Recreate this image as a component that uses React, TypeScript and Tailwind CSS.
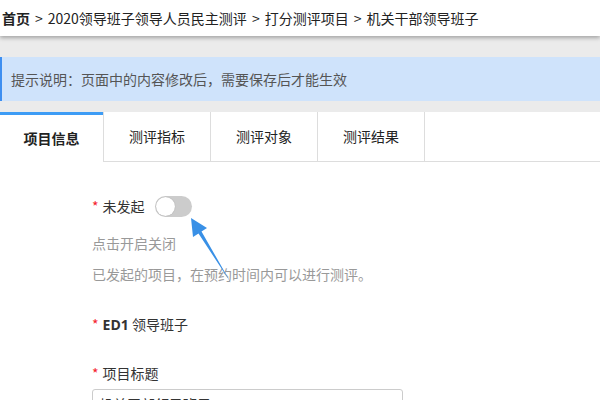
const font = "font-['Microsoft_YaHei','Noto_Sans_CJK_SC','Liberation_Sans',sans-serif]";

function Required({ children }: { children: React.ReactNode }) {
  return (
    <div className="flex items-center gap-[4px] text-[14px] text-[#333]">
      <span className="text-[#f5222d]">*</span>
      {children}
    </div>
  );
}

export default function App() {
  const tabs = ['测评指标', '测评对象', '测评结果'];
  return (
    <div className={`relative h-[400px] w-[600px] overflow-hidden bg-white ${font}`}>
      <header className="relative z-10 flex h-[36px] items-center bg-white pl-[2px] text-[14px] text-[#222] shadow-[0_2px_4px_rgba(0,0,0,0.3)]">
        <span className="font-bold">首页</span>
        <span className="mx-[5px]">&gt;</span>
        <span>2020领导班子领导人员民主测评</span>
        <span className="mx-[5px]">&gt;</span>
        <span>打分测评项目</span>
        <span className="mx-[5px]">&gt;</span>
        <span>机关干部领导班子</span>
      </header>

      <div className="bg-[#ebebeb] pb-[11px] pt-[21px]">
        <div className="flex h-[44px] items-center border-l-[2px] border-[#3d8ef0] bg-[#cfe3fb] pl-[9px] text-[14px] text-[#555]">
          提示说明：页面中的内容修改后，需要保存后才能生效
        </div>
      </div>

      <nav className="flex h-[50px] bg-white text-[14px] text-[#222]">
        <div className="flex w-[103px] items-center justify-center border-t-[3px] border-[#3d9cf5] font-bold">
          项目信息
        </div>
        {tabs.map((t) => (
          <div key={t} className="flex w-[107px] items-center justify-center border-b border-l border-[#dddddd]">
            {t}
          </div>
        ))}
        <div className="flex-1 border-b border-l border-[#dddddd]" />
      </nav>

      <section className="flex flex-col pl-[92px] pt-[34px]">
        <div className="flex items-center gap-[10px]">
          <Required>未发起</Required>
          <div className="relative h-[21px] w-[37px] rounded-full bg-[#cccccc]">
            <div className="absolute left-[1px] top-[1px] h-[19px] w-[19px] rounded-full bg-white shadow-[0_0_1px_rgba(0,0,0,0.3)]" />
          </div>
        </div>
        <p className="mt-[16px] text-[14px] text-[#999]">点击开启关闭</p>
        <p className="mt-[10px] text-[14px] text-[#999]">已发起的项目，在预约时间内可以进行测评。</p>
        <div className="mt-[29px]">
          <Required>
            <span>
              <b className="font-['Open_Sans','Noto_Sans_CJK_SC',sans-serif] font-bold">ED1</b> 领导班子
            </span>
          </Required>
        </div>
        <div className="mt-[28px]">
          <Required>项目标题</Required>
        </div>
        <div className="mt-[5px] h-[32px] w-[311px] rounded-[3px] border border-[#cccccc] px-[6px] pt-[4px] text-[14px] text-[#333]">
          机关干部领导班子
        </div>
      </section>

      <svg className="pointer-events-none absolute left-0 top-0" width="600" height="400">
        <polygon
          points="191,218 193,237 198.5,233.5 231,283 201.5,231.5 207,228"
          fill="#3990e6"
        />
      </svg>
    </div>
  );
}
